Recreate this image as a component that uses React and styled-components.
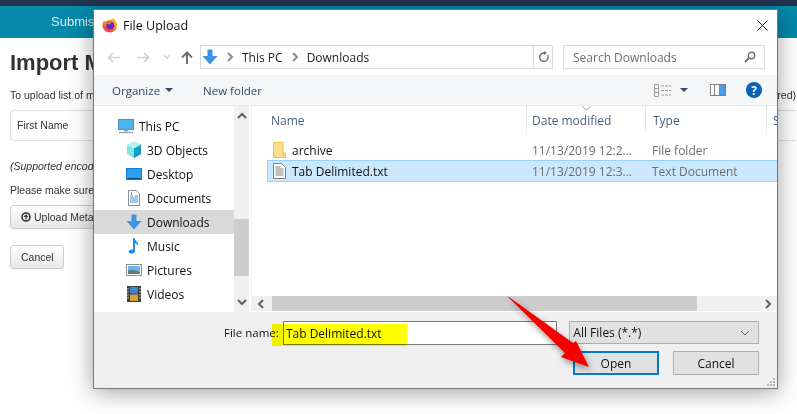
import React from "react";
import styled, { createGlobalStyle } from "styled-components";

const Global = createGlobalStyle`
  html, body { margin: 0; padding: 0; background: #fff; }
  body { width: 797px; height: 414px; overflow: hidden; position: relative; font-family: "Liberation Sans", Arial, sans-serif; }
`;

const TopBar = styled.div`height: 6px; background: #22344f;`;
const Nav = styled.div`
  height: 32px;
  background: #0489ab;
  color: #d8eef4;
  font-size: 13px;
  line-height: 32px;
  padding-left: 51px;
`;
const Main = styled.div`
  padding: 12px 1px 0 10px;
  color: #333;
  font-size: 10.5px;
`;
const Title = styled.h1`
  margin: 0;
  font-size: 22px;
  line-height: 26px;
  font-weight: 700;
`;
const InfoRow = styled.div`
  display: flex;
  justify-content: space-between;
  margin-top: 12px;
  line-height: 14px;
`;
const FieldBox = styled.div`
  margin-top: 8px;
  height: 29px;
  border: 1px solid #ddd;
  border-right: 0;
  border-radius: 4px 0 0 4px;
  padding-left: 6px;
  line-height: 29px;
`;
const Note = styled.p`
  margin: ${(p) => p.$top}px 0 0;
  line-height: 14px;
  font-style: ${(p) => (p.$italic ? "italic" : "normal")};
`;
const PageButton = styled.div`
  display: flex;
  align-items: center;
  gap: 3px;
  box-sizing: border-box;
  width: ${(p) => p.$width}px;
  height: 24px;
  margin-top: ${(p) => p.$top}px;
  padding-left: ${(p) => p.$pad}px;
  border: 1px solid #ccc;
  border-radius: 3px;
  background: linear-gradient(#fff, #e8e8e8);
`;

const Dialog = styled.div`
  position: absolute;
  left: 93px;
  top: 9px;
  width: 683px;
  height: 378px;
  border: 1px solid #6f7a80;
  background: #fff;
  box-shadow: 0 3px 22px rgba(0, 0, 0, 0.38);
  display: flex;
  flex-direction: column;
  font-family: "Open Sans", "Noto Sans", sans-serif;
  font-size: 12px;
  color: #111;
`;
const TitleBar = styled.div`
  height: 30px;
  display: flex;
  align-items: center;
  padding: 0 9px 0 8px;
  gap: 5px;
  font-size: 12.5px;
`;
const CloseIcon = styled.svg`margin-left: auto;`;
const AddressRow = styled.div`
  height: 34px;
  margin-bottom: 1px;
  display: flex;
  align-items: center;
  padding: 0 12px 0 13px;
`;
const NavIcon = styled.svg`
  flex: none;
  margin-right: ${(p) => p.$gap}px;
`;
const Address = styled.div`
  width: 350px;
  height: 22px;
  border: 1px solid #d9d9d9;
  display: flex;
  align-items: center;
  padding-left: 1px;
  gap: 8px;
  margin-left: 7px;
`;
const Crumb = styled.span`color: #222;`;
const RefreshCell = styled.div`
  margin-left: auto;
  width: 18px;
  height: 22px;
  border-left: 1px solid #d9d9d9;
  display: flex;
  align-items: center;
  justify-content: center;
`;
const SearchBox = styled.div`
  width: 191px;
  height: 22px;
  margin-left: auto;
  border: 1px solid #d9d9d9;
  padding-left: 9px;
  display: flex;
  align-items: center;
  justify-content: space-between;
  color: #6d6d6d;
`;
const SearchIcon = styled.svg`margin-right: 8px;`;
const Toolbar = styled.div`
  height: 30px;
  background: #f5f6f7;
  border-bottom: 1px solid #e8eaec;
  display: flex;
  align-items: center;
  padding: 0 15px 0 18px;
  color: #2f4a67;
  font-size: 11.5px;
`;
const ToolText = styled.span`margin-right: ${(p) => p.$gap}px;`;
const ToolIcon = styled.svg`
  flex: none;
  margin-right: ${(p) => p.$gap || 0}px;
  margin-left: ${(p) => (p.$push ? "auto" : "0")};
`;
const Content = styled.div`
  height: 206px;
  display: flex;
`;
const Sidebar = styled.div`
  width: 140px;
  padding-top: 8px;
`;
const TreeRow = styled.div`
  height: 24px;
  display: flex;
  align-items: center;
  gap: 4px;
  padding-left: ${(p) => (p.$root ? 23 : 31)}px;
  background: ${(p) => (p.$active ? "#d9d9d9" : "transparent")};
`;
const VScroll = styled.div`
  width: 15px;
  background: #f0f0f0;
  display: flex;
  flex-direction: column;
  align-items: center;
  justify-content: space-between;
  padding: 6px 0;
  position: relative;
`;
const VThumb = styled.div`
  position: absolute;
  top: 113px;
  left: 0;
  width: 15px;
  height: 57px;
  background: #cdcdcd;
`;
const Pane = styled.div`
  flex: 1;
  margin-left: 2px;
  padding-bottom: 1px;
  border-left: 1px solid #f0f0f0;
  display: flex;
  flex-direction: column;
  min-width: 0;
`;
const HeaderRow = styled.div`
  height: 27px;
  display: grid;
  grid-template-columns: 275px 119px 121px 1fr;
  color: #4c607a;
  position: relative;
`;
const HeaderCell = styled.div`
  padding-left: ${(p) => p.$pad}px;
  border-right: ${(p) => (p.$last ? "0" : "1px solid #e5e5e5")};
  line-height: 30px;
  white-space: nowrap;
  overflow: hidden;
`;
const SortMark = styled.svg`
  position: absolute;
  left: 330px;
  top: 0;
`;
const Files = styled.div`
  flex: 1;
  padding: 7px 0 0 15px;
`;
const FileRow = styled.div`
  height: ${(p) => (p.$selected ? 20 : 18)}px;
  display: grid;
  grid-template-columns: 264px 120px 1fr;
  align-items: center;
  background: ${(p) => (p.$selected ? "#cce8ff" : "transparent")};
  border: 1px solid ${(p) => (p.$selected ? "#99d1ff" : "transparent")};
  border-right: 0;
  color: #6d6d6d;
`;
const FileName = styled.div`
  display: flex;
  align-items: center;
  gap: 6px;
  padding-left: 5px;
  color: #111;
`;
const HScroll = styled.div`
  height: 15px;
  background: #f0f0f0;
  display: flex;
  align-items: center;
  justify-content: space-between;
  padding: 0 5px;
  position: relative;
`;
const HThumb = styled.div`
  position: absolute;
  left: 20px;
  top: 0;
  width: 425px;
  height: 15px;
  background: #cdcdcd;
`;
const Footer = styled.div`
  flex: 1;
  background: #f0f0f0;
  padding: 9px 18px 0 0;
  position: relative;
`;
const NameRow = styled.div`
  display: flex;
  align-items: flex-start;
  padding-left: 130px;
`;
const NameLabel = styled.span`
  width: 59px;
  white-space: nowrap;
  line-height: 23px;
  font-size: 11.5px;
`;
const NameInput = styled.div`
  width: 271px;
  height: 22px;
  margin-right: 12px;
  border: 1px solid #7a7a7a;
  background: #fff;
  padding-left: 2px;
  line-height: 23px;
`;
const Combo = styled.div`
  width: 177px;
  height: 21px;
  border: 1px solid #adadad;
  background: #e1e1e1;
  padding: 0 8px 0 3px;
  display: flex;
  align-items: center;
  justify-content: space-between;
`;
const ButtonRow = styled.div`
  display: flex;
  justify-content: flex-end;
  gap: 14px;
  margin-top: 6px;
`;
const DialogButton = styled.div`
  box-sizing: border-box;
  width: 86px;
  height: 24px;
  background: #e1e1e1;
  border: ${(p) => (p.$primary ? "2px solid #0078d7" : "1px solid #adadad")};
  display: flex;
  align-items: center;
  justify-content: center;
`;
const Grip = styled.svg`
  position: absolute;
  right: 2px;
  bottom: 2px;
`;
const Highlight = styled.div`
  position: absolute;
  left: 178px;
  top: 314px;
  width: 135px;
  height: 22px;
  background: #ffff00;
  mix-blend-mode: multiply;
`;
const Arrow = styled.svg`
  position: absolute;
  left: 495px;
  top: 285px;
  filter: drop-shadow(1px 3px 3px rgba(0, 0, 0, 0.4));
`;
const IconSlot = styled.span`
  width: 18px;
  display: flex;
  justify-content: center;
`;
const FileIconSlot = styled.span`
  width: 13px;
  height: 16px;
  display: flex;
  justify-content: center;
`;

const Chevron = ({ dir, color = "#606060" }) => {
  const paths = {
    up: "M1 6 L5 2 L9 6",
    down: "M1 2 L5 6 L9 2",
    left: "M6 1 L2 5 L6 9",
    right: "M2 1 L6 5 L2 9",
  };
  const wide = dir === "up" || dir === "down";
  return (
    <svg width={wide ? 10 : 8} height={wide ? 8 : 10} viewBox={wide ? "0 0 10 8" : "0 0 8 10"}>
      <path d={paths[dir]} fill="none" stroke={color} strokeWidth="2" />
    </svg>
  );
};

const BlueDown = ({ size = 16 }) => (
  <svg width={size} height={size} viewBox="0 0 16 16">
    <path d="M5.5 0.5 H10.5 V7 H15.5 L8 15.5 L0.5 7 H5.5 Z" fill="#3d94e4" />
  </svg>
);

const FirefoxLogo = () => (
  <svg width="16" height="16" viewBox="0 0 16 16">
    <defs>
      <linearGradient id="ffg" x1="0.7" y1="0" x2="0.2" y2="1">
        <stop offset="0" stopColor="#ffc02e" />
        <stop offset="0.55" stopColor="#ff7a2b" />
        <stop offset="1" stopColor="#f3214f" />
      </linearGradient>
    </defs>
    <path d="M11 0.5 C11.5 2 13 3 14 4.5 C16.5 8.5 14.5 15.5 8 15.5 C3.5 15.5 0.3 12 0.5 8 C0.6 6 1.3 4.4 2.3 3.4 L3.2 4.8 C4.5 3.4 6.5 3 8 3 C9.5 2.8 10.8 2 11 0.5 Z" fill="url(#ffg)" />
    <circle cx="8.2" cy="8.4" r="4" fill="#6a2bb5" />
    <path d="M5 7 C6 5.2 8.5 5 10.2 5.8 C8.8 5.8 7.8 6.5 7.6 7.4 Z" fill="#ff8b3d" />
  </svg>
);

const MonitorIcon = () => (
  <svg width="16" height="15" viewBox="0 0 16 15">
    <rect x="0.5" y="0.5" width="15" height="10" fill="#4db4f2" stroke="#5a8fae" />
    <path d="M6 11 H10 V12.5 H6 Z" fill="#9aa9b3" />
    <path d="M1 13.5 H15" stroke="#9aa9b3" strokeWidth="1.4" />
  </svg>
);
const CubeIcon = () => (
  <svg width="16" height="16" viewBox="0 0 16 16">
    <path d="M8 0 L15 3 V12 L8 16 Z" fill="#2ba3c9" />
    <path d="M8 0 L1 3 V12 L8 16 Z" fill="#7fe3e3" />
    <path d="M8 0 L15 3 L8 6.5 L1 3 Z" fill="#b2f1ee" />
    <path d="M8 6.5 L15 3 V12 L8 16 Z" fill="#14a0c4" />
  </svg>
);
const DesktopIcon = () => (
  <svg width="16" height="12" viewBox="0 0 16 12">
    <rect width="16" height="12" fill="#0f7fd8" />
    <path d="M1 1 H15 V10 H1 Z" fill="#2aa0ee" />
    <path d="M2 10.6 H14" stroke="#0b2e52" strokeWidth="0.8" />
  </svg>
);
const DocumentsIcon = () => (
  <svg width="12" height="16" viewBox="0 0 12 16">
    <path d="M0.5 0.5 H8.5 L11.5 3.5 V15.5 H0.5 Z" fill="#fff" stroke="#8a8a8a" />
    <path d="M2 6 H5 M7 6 H10 M2 8 H10 M2 10 H10 M2 12 H10" stroke="#3f8fd8" strokeWidth="1" />
    <path d="M3.5 2.5 V5" stroke="#3f8fd8" />
  </svg>
);
const MusicIcon = () => (
  <svg width="12" height="16" viewBox="0 0 12 16">
    <path d="M5 0 H6.5 C7 3 11 4 10 8 C9.6 6.5 8.5 5.6 7 5.3 V13 C7 15 4.6 16 2.5 15.6 C0.3 15.1 0 13 1.6 12 C3 11.2 4.2 11.3 5 11.7 Z" fill="#1b8fe8" />
  </svg>
);
const PicturesIcon = () => (
  <svg width="16" height="12" viewBox="0 0 16 12">
    <rect x="0.5" y="0.5" width="15" height="11" fill="#fff" stroke="#8f8f8f" />
    <rect x="2" y="2" width="12" height="5" fill="#6fb4e8" />
    <path d="M2 7 C5 5 9 6 14 7.5 V10 H2 Z" fill="#5d8068" />
  </svg>
);
const VideosIcon = () => (
  <svg width="14" height="16" viewBox="0 0 14 16">
    <rect width="14" height="16" fill="#3d3d3d" />
    <rect x="3" y="1" width="8" height="6.5" fill="#3f87d6" />
    <rect x="3" y="8.5" width="8" height="6.5" fill="#d6a23f" />
    <path d="M1 2 V14 M13 2 V14" stroke="#ddd" strokeWidth="1" strokeDasharray="1.5 1.5" />
  </svg>
);
const FolderIcon = () => (
  <svg width="13" height="16" viewBox="0 0 13 16">
    <path d="M0.5 0.5 H10 V11 H12.5 V15.5 H0.5 Z" fill="#fce08c" stroke="#e8c14d" />
    <path d="M10 11 V15" stroke="#e8c14d" />
  </svg>
);
const TextFileIcon = () => (
  <svg width="13" height="16" viewBox="0 0 13 16">
    <path d="M0.5 0.5 H8.5 L12.5 4.5 V15.5 H0.5 Z" fill="#fff" stroke="#808080" />
    <path d="M2.5 4 H7 M2.5 6 H10.5 M2.5 8 H10.5 M2.5 10 H10.5 M2.5 12 H10.5" stroke="#808080" />
  </svg>
);

const tree = [
  ["3D Objects", CubeIcon],
  ["Desktop", DesktopIcon],
  ["Documents", DocumentsIcon],
  ["Downloads", BlueDown],
  ["Music", MusicIcon],
  ["Pictures", PicturesIcon],
  ["Videos", VideosIcon],
];

export default function App() {
  return (
    <>
      <Global />
      <TopBar />
      <Nav>Submissions</Nav>
      <Main>
        <Title>Import Metadata</Title>
        <InfoRow>
          <span>To upload list of metadata, use the template below</span>
          <span>required)</span>
        </InfoRow>
        <FieldBox>First Name</FieldBox>
        <Note $italic $top={18}>(Supported encoding: UTF-8)</Note>
        <Note $top={10}>Please make sure the file is valid</Note>
        <PageButton $width={140} $top={8} $pad={10}>
          <svg width="10" height="10" viewBox="0 0 10 10">
            <circle cx="5" cy="5" r="4" fill="none" stroke="#333" strokeWidth="1.6" />
            <path d="M5 7.5 V3 M3.2 4.8 L5 3 L6.8 4.8" fill="none" stroke="#333" strokeWidth="1.2" />
          </svg>
          Upload Metadata
        </PageButton>
        <PageButton $width={54} $top={16} $pad={10}>Cancel</PageButton>
      </Main>

      <Dialog>
        <TitleBar>
          <FirefoxLogo />
          File Upload
          <CloseIcon width="11" height="11" viewBox="0 0 11 11">
            <path d="M0.5 0.5 L10.5 10.5 M10.5 0.5 L0.5 10.5" stroke="#111" strokeWidth="1" />
          </CloseIcon>
        </TitleBar>
        <AddressRow>
          <NavIcon $gap={17} width="13" height="11" viewBox="0 0 13 11">
            <path d="M6 1 L1.5 5.5 L6 10 M2 5.5 H13" fill="none" stroke="#d0d0d0" strokeWidth="1.6" />
          </NavIcon>
          <NavIcon $gap={13} width="13" height="11" viewBox="0 0 13 11">
            <path d="M7 1 L11.5 5.5 L7 10 M11 5.5 H0" fill="none" stroke="#d0d0d0" strokeWidth="1.6" />
          </NavIcon>
          <NavIcon $gap={10} width="8" height="6" viewBox="0 0 8 6">
            <path d="M1 1 L4 4 L7 1" fill="none" stroke="#d0d0d0" strokeWidth="1.4" />
          </NavIcon>
          <NavIcon $gap={0} width="12" height="13" viewBox="0 0 12 13">
            <path d="M1 6.5 L6 1.5 L11 6.5 M6 2 V13" fill="none" stroke="#6f6f6f" strokeWidth="2" />
          </NavIcon>
          <Address>
            <BlueDown />
            <Chevron dir="right" color="#8a8a8a" />
            <Crumb>This PC</Crumb>
            <Chevron dir="right" color="#8a8a8a" />
            <Crumb>Downloads</Crumb>
            <RefreshCell>
              <svg width="11" height="12" viewBox="0 0 11 12">
                <path d="M9.5 4 A4.2 4.2 0 1 1 5.5 2 H8" fill="none" stroke="#707070" strokeWidth="1.4" />
                <path d="M6 0 L9 2 L6 4 Z" fill="#707070" />
              </svg>
            </RefreshCell>
          </Address>
          <SearchBox>
            Search Downloads
            <SearchIcon width="12" height="12" viewBox="0 0 12 12">
              <circle cx="7.5" cy="4.5" r="3.2" fill="none" stroke="#707070" strokeWidth="1.4" />
              <path d="M5 7 L1 11" stroke="#707070" strokeWidth="2" />
            </SearchIcon>
          </SearchBox>
        </AddressRow>
        <Toolbar>
          <ToolText $gap={5}>Organize</ToolText>
          <ToolIcon $gap={30} width="8" height="4" viewBox="0 0 8 4">
            <path d="M0 0 H8 L4 4 Z" fill="#2f4a67" />
          </ToolIcon>
          <ToolText $gap={0}>New folder</ToolText>
          <ToolIcon $push $gap={9} width="17" height="13" viewBox="0 0 17 13">
            <path d="M0.5 0.5 H4.5 V12.5 H0.5 Z M0.5 4.5 H4.5 M0.5 8.5 H4.5" fill="none" stroke="#9a9a9a" />
            <path d="M7 2 H17 M7 6.5 H17 M7 11 H17" stroke="#9a9a9a" strokeDasharray="3 1" />
          </ToolIcon>
          <ToolIcon $gap={22} width="8" height="4" viewBox="0 0 8 4">
            <path d="M0 0 H8 L4 4 Z" fill="#2f4a67" />
          </ToolIcon>
          <ToolIcon $gap={20} width="16" height="12" viewBox="0 0 16 12">
            <rect x="0.5" y="0.5" width="15" height="11" fill="#fff" stroke="#808080" />
            <rect x="9" y="1" width="6" height="10" fill="#4a9be6" />
            <path d="M4.5 1 V11" stroke="#808080" />
          </ToolIcon>
          <svg width="16" height="16" viewBox="0 0 16 16">
            <circle cx="8" cy="8" r="8" fill="#0b63b5" />
            <text x="8" y="12.5" textAnchor="middle" fontSize="12" fontWeight="700" fill="#fff" fontFamily="Open Sans">?</text>
          </svg>
        </Toolbar>
        <Content>
          <Sidebar>
            <TreeRow $root>
              <IconSlot><MonitorIcon /></IconSlot>
              This PC
            </TreeRow>
            {tree.map(([label, Icon]) => (
              <TreeRow key={label} $active={label === "Downloads"}>
                <IconSlot><Icon /></IconSlot>
                {label}
              </TreeRow>
            ))}
          </Sidebar>
          <VScroll>
            <Chevron dir="up" />
            <VThumb />
            <Chevron dir="down" />
          </VScroll>
          <Pane>
            <HeaderRow>
              <HeaderCell $pad={19}>Name</HeaderCell>
              <HeaderCell $pad={5}>Date modified</HeaderCell>
              <HeaderCell $pad={7}>Type</HeaderCell>
              <HeaderCell $pad={6} $last>Size</HeaderCell>
              <SortMark width="9" height="5" viewBox="0 0 9 5">
                <path d="M0.5 0.5 L4.5 4 L8.5 0.5" fill="none" stroke="#9a9a9a" />
              </SortMark>
            </HeaderRow>
            <Files>
              <FileRow>
                <FileName><FileIconSlot><FolderIcon /></FileIconSlot>archive</FileName>
                <span>11/13/2019 12:2...</span>
                <span>File folder</span>
              </FileRow>
              <FileRow $selected>
                <FileName><FileIconSlot><TextFileIcon /></FileIconSlot>Tab Delimited.txt</FileName>
                <span>11/13/2019 12:3...</span>
                <span>Text Document</span>
              </FileRow>
            </Files>
            <HScroll>
              <Chevron dir="left" />
              <HThumb />
              <Chevron dir="right" />
            </HScroll>
          </Pane>
        </Content>
        <Footer>
          <NameRow>
            <NameLabel>File name:</NameLabel>
            <NameInput>Tab Delimited.txt</NameInput>
            <Combo>
              All Files (*.*)
              <svg width="10" height="6" viewBox="0 0 10 6">
                <path d="M1 1 L5 5 L9 1" fill="none" stroke="#606060" />
              </svg>
            </Combo>
          </NameRow>
          <ButtonRow>
            <DialogButton $primary>Open</DialogButton>
            <DialogButton>Cancel</DialogButton>
          </ButtonRow>
          <Grip width="9" height="9" viewBox="0 0 9 9">
            <path d="M7 1 H9 V3 H7 Z M4 4 H6 V6 H4 Z M7 4 H9 V6 H7 Z M1 7 H3 V9 H1 Z M4 7 H6 V9 H4 Z M7 7 H9 V9 H7 Z" fill="#b5b5b5" />
          </Grip>
        </Footer>
        <Highlight />
      </Dialog>

      <Arrow width="110" height="95" viewBox="0 0 110 95">
        <path d="M13 12 L14 12 L78 58 L81 56 L94 82 L66 72 L70 68 Z" fill="#f40000" />
      </Arrow>
    </>
  );
}
